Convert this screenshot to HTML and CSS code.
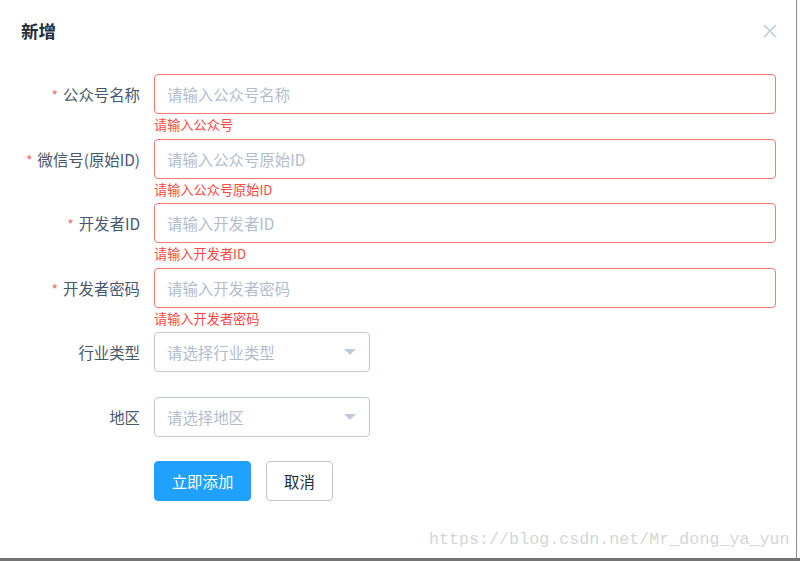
FILE: index.html
```html
<!DOCTYPE html>
<html lang="zh">
<head>
<meta charset="utf-8">
<title>新增</title>
<link rel="stylesheet" href="styles.css">
</head>
<body>
<div class="screen">
  <div class="dialog">
    <div class="header">
      <span class="title">新增</span>
      <svg class="close" width="14" height="14" viewBox="0 0 14 14"><path d="M1 1L13 13M13 1L1 13" stroke="#bfcbd9" stroke-width="1.6" fill="none"/></svg>
    </div>
    <form class="form">
      <div class="item err">
        <label class="label"><span class="req">*</span>公众号名称</label>
        <div class="content">
          <div class="input invalid"><span class="ph">请输入公众号名称</span></div>
          <div class="error">请输入公众号</div>
        </div>
      </div>
      <div class="item err">
        <label class="label"><span class="req">*</span>微信号(原始ID)</label>
        <div class="content">
          <div class="input invalid"><span class="ph">请输入公众号原始ID</span></div>
          <div class="error">请输入公众号原始ID</div>
        </div>
      </div>
      <div class="item err">
        <label class="label"><span class="req">*</span>开发者ID</label>
        <div class="content">
          <div class="input invalid"><span class="ph">请输入开发者ID</span></div>
          <div class="error">请输入开发者ID</div>
        </div>
      </div>
      <div class="item err">
        <label class="label"><span class="req">*</span>开发者密码</label>
        <div class="content">
          <div class="input invalid"><span class="ph">请输入开发者密码</span></div>
          <div class="error">请输入开发者密码</div>
        </div>
      </div>
      <div class="item">
        <label class="label">行业类型</label>
        <div class="content">
          <div class="input select"><span class="ph">请选择行业类型</span><span class="arrow"></span></div>
        </div>
      </div>
      <div class="item">
        <label class="label">地区</label>
        <div class="content">
          <div class="input select"><span class="ph">请选择地区</span><span class="arrow"></span></div>
        </div>
      </div>
      <div class="item">
        <div class="label"></div>
        <div class="content buttons">
          <button type="button" class="btn primary">立即添加</button>
          <button type="button" class="btn default">取消</button>
        </div>
      </div>
    </form>
    <div class="watermark">https://blog.csdn.net/Mr_dong_ya_yun</div>
  </div>
  <div class="bottom-bar"></div>
</div>
</body>
</html>
```
FILE: styles.css
```css
html, body {
  margin: 0;
  padding: 0;
  background: #ffffff;
}
body {
  font-family: "Noto Sans CJK SC", "Noto Sans", sans-serif;
  width: 800px;
  height: 561px;
  overflow: hidden;
}
.screen {
  display: flex;
  flex-direction: column;
  width: 800px;
  height: 561px;
}
.dialog {
  position: relative;
  width: 797px;
  height: 558px;
  border-right: 1px solid #8c8c8c;
  box-sizing: border-box;
  background: #fff;
}
.bottom-bar {
  height: 3px;
  background: #747474;
}
.header {
  display: flex;
  align-items: center;
  justify-content: space-between;
  height: 32px;
  padding: 15px 19px 0 21px;
}
.title {
  font-size: 17.5px;
  font-weight: 700;
  color: #1f2d3d;
  line-height: 32px;
}
.close {
  display: block;
}
.form {
  padding: 27px 20px 0 0;
}
.item {
  display: flex;
  margin-bottom: 24.5px;
}
.item.err {
  margin-bottom: 4.5px;
}
.label {
  width: 154px;
  flex: none;
  box-sizing: border-box;
  padding-right: 14px;
  text-align: right;
  font-size: 15.4px;
  line-height: 40px;
  color: #48576a;
}
.req {
  color: #f56c6c;
  font-size: 14px;
  margin-right: 5px;
}
.content {
  flex: 1;
}
.input {
  height: 40px;
  box-sizing: border-box;
  border: 1px solid #bfcbd9;
  border-radius: 4px;
  padding: 0 12px;
  display: flex;
  align-items: center;
  font-size: 15.4px;
}
.input.invalid {
  border-color: #f87676;
  border-width: 1.5px;
}
.ph {
  color: #b4bccc;
}
.select {
  width: 216px;
  justify-content: space-between;
  padding-right: 13px;
}
.arrow {
  width: 0;
  height: 0;
  border-left: 6px solid transparent;
  border-right: 6px solid transparent;
  border-top: 6px solid #bfcbd9;
}
.error {
  color: #ff4949;
  font-size: 13.2px;
  line-height: 18px;
  padding-top: 2px;
}
.buttons {
  display: flex;
  gap: 15px;
}
.btn {
  height: 40px;
  border-radius: 4px;
  font-family: "Noto Sans CJK SC", "Noto Sans", sans-serif;
  font-size: 15.4px;
  padding: 0;
  cursor: pointer;
}
.btn.primary {
  width: 97px;
  background: #20a0ff;
  border: 1px solid #20a0ff;
  color: #fff;
}
.btn.default {
  width: 67px;
  background: #fff;
  border: 1px solid #c4c4c4;
  color: #1f2d3d;
}
.watermark {
  position: absolute;
  left: 429px;
  top: 529px;
  font-family: "Liberation Mono", "DejaVu Sans Mono", monospace;
  font-size: 16.7px;
  line-height: 22px;
  color: #d6d6d6;
}
```
